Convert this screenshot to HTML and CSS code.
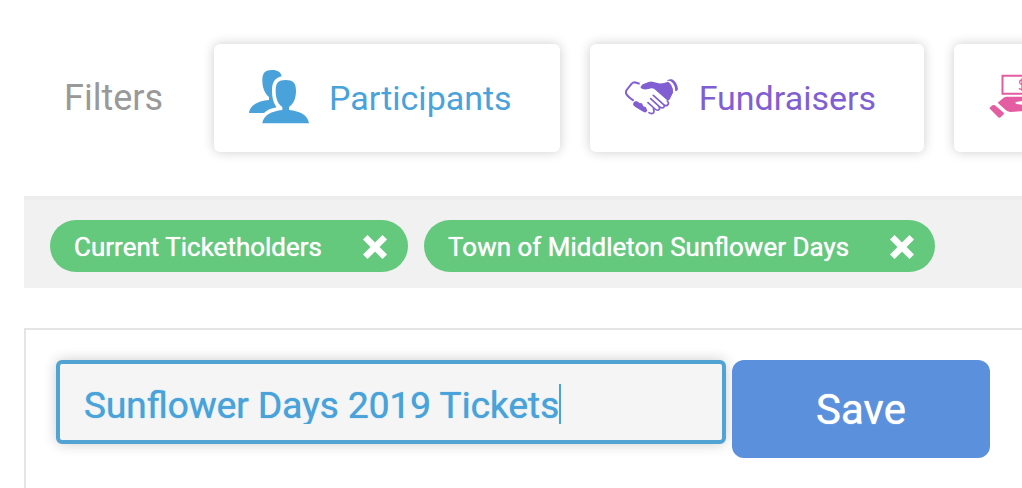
FILE: index.html
```html
<!DOCTYPE html>
<html lang="en">
<head>
<meta charset="utf-8">
<title>Filters</title>
<link rel="stylesheet" href="styles.css">
</head>
<body>
<main class="page">
  <nav class="filters" aria-label="Filters">
    <span class="filters-label">Filters</span>
    <button type="button" class="card card-participants">
      <svg class="icon-people" viewBox="147 117 180 165" aria-hidden="true">
        <path fill="currentColor" d="M147 249C149 225 174 213 207 210V201C193 190 187 171 187 151C187 128 196 120 216 120C234 120 243 127 245 139C225 143 216 158 216 181C216 204 221 221 230 232C213 235 201 240 192 249Z"/>
        <path fill="currentColor" d="M187 280C190 256 215 243 247 240V231C232 220 227 203 227 182C227 158 236 150 257 150C278 150 288 158 288 182C288 203 282 220 267 231V240C300 243 324 256 327 280Z"/>
      </svg>
      <span>Participants</span>
    </button>
    <button type="button" class="card card-fundraisers">
      <svg class="icon-shake" viewBox="129 144 162 111" aria-hidden="true">
        <path fill="none" stroke="currentColor" stroke-width="6" d="M173 161L158 157Q153 157 149 161L134 180Q130 186 133 192Q137 200 155 212"/>
        <path fill="currentColor" d="M176 170Q179 162 190 160Q202 154 211 155L230 160Q245 161 258 155Q263 157 268 166Q275 178 273 188L262 210Q257 213 252 208L216 176Q208 173 200 177Q184 181 176 174Z"/>
        <path fill="currentColor" d="M256 151Q263 146 270 148Q285 155 288 178Q286 184 280 184Q280 165 268 155Q263 151 256 153Z"/>
        <path fill="currentColor" d="M153 222Q154 214 162 213Q169 215 172 219L180 220L184 229Q193 230 194 237Q198 241 193 246Q189 249 181 244L160 231Q153 227 153 222Z"/>
        <path fill="none" stroke="currentColor" stroke-width="5" stroke-linecap="round" d="M214 196L244 223Q251 230 257 225Q262 220 256 213M206 206L232 230Q241 237 246 231Q248 227 244 223M198 218L219 237Q227 244 232 238Q234 234 230 229M201 248Q208 253 214 249Q218 245 214 237"/>
      </svg>
      <span>Fundraisers</span>
    </button>
    <button type="button" class="card card-donations" aria-label="Donations">
      <svg class="icon-money" viewBox="256 129 198 132" aria-hidden="true">
        <path fill="none" stroke="currentColor" stroke-width="6" d="M296.500 134.500H416V188.500H296.500Z"/>
        <path fill="none" stroke="currentColor" stroke-width="4" d="M363 150Q359 145 353 147Q347 149 348 155Q349 159 356 161Q364 164 363 170Q361 176 354 176Q349 175 346 172M355 142V180"/>
        <path fill="currentColor" d="M282 215L300 200Q304 197 310 197H362Q374 199 374 207L336 213Q334 217 339 219L380 225L440 205Q448 208 444 214L390 238L320 243Q311 242 306 237ZM257 232L264 224Q269 220 274 223L300 245Q302 248 299 251L289 260Q286 261 283 258Z"/>
      </svg>
    </button>
  </nav>

  <section class="tags" aria-label="Active filters">
    <span class="tag">Current Ticketholders
      <button type="button" class="tag-close" aria-label="Remove Current Ticketholders">
        <svg viewBox="0 0 24 24" aria-hidden="true"><path d="M3 3L21 21M21 3L3 21"/></svg>
      </button>
    </span>
    <span class="tag">Town of Middleton Sunflower Days
      <button type="button" class="tag-close" aria-label="Remove Town of Middleton Sunflower Days">
        <svg viewBox="0 0 24 24" aria-hidden="true"><path d="M3 3L21 21M21 3L3 21"/></svg>
      </button>
    </span>
  </section>

  <form class="panel">
    <div class="field">
      <input class="field-input" type="text" aria-label="Filter name" value="Sunflower Days 2019 Tickets">
    </div>
    <button type="button" class="save">Save</button>
  </form>
</main>
</body>
</html>
```
FILE: styles.css
```css
* { box-sizing: border-box; }

body {
  margin: 0;
  background: #fff;
  font-family: Roboto, "Liberation Sans", sans-serif;
}

button, input { font: inherit; }
button { border: 0; cursor: pointer; }

.page {
  display: flex;
  flex-direction: column;
  min-height: 100vh;
  padding-left: 24px;
}

.filters {
  display: flex;
  align-items: center;
  gap: 30px;
  padding: 44px 0 44px 40px;
  overflow: hidden;
  font-size: 34px;
}

.filters-label {
  flex: none;
  margin-right: 21px;
  color: #999;
  font-size: 36px;
}

.card {
  display: flex;
  flex: none;
  align-items: center;
  gap: 20px;
  min-height: 108px;
  padding: 0 48px 0 35px;
  border-radius: 6px;
  background: #fff;
  box-shadow: 0 0 12px rgba(0, 0, 0, 0.2);
}

.card svg { flex: none; margin-bottom: 4px; }
.card-participants { color: #49a2da; }
.card-fundraisers { color: #815fd2; }
.card-donations { color: #e45da2; }
.icon-people { width: 60px; height: 55px; }
.icon-shake { width: 54px; height: 37px; }
.icon-money { width: 66px; height: 44px; }

.tags {
  display: flex;
  gap: 16px;
  padding: 20px 26px 16px;
  border-top: 4px solid #ededed;
  background: #f1f1f1;
}

.tag {
  display: flex;
  align-items: center;
  gap: 40px;
  height: 52px;
  padding: 2px 20px 0 24px;
  border-radius: 26px;
  background: #64c87d;
  color: #fff;
  font-size: 26px;
  text-shadow: 0 0 1px currentColor;
  white-space: nowrap;
}

.tag-close {
  display: flex;
  padding: 0;
  background: none;
  color: #fff;
}

.tag-close svg {
  width: 26px;
  height: 26px;
  fill: none;
  stroke: currentColor;
  stroke-width: 6;
}

.panel {
  display: flex;
  flex: 1;
  align-items: flex-start;
  gap: 6px;
  margin-top: 40px;
  padding: 30px 32px 30px 30px;
  border: solid #e5e5e5;
  border-width: 2px 0 0 2px;
}

.field {
  display: flex;
  flex: 1;
  align-items: center;
  height: 84px;
  padding: 4px 24px 0;
  border: 4px solid #50a3d3;
  border-radius: 6px;
  background: #f5f5f5;
  box-shadow: 0 0 14px rgba(0, 0, 0, 0.2);
}

.field-input {
  field-sizing: content;
  height: 40px;
  padding: 2px 0 0;
  border: 0;
  border-right: 2px solid #49a2da;
  outline: 0;
  background: none;
  color: #49a2da;
  font-size: 37px;
  text-shadow: 0 0 1px currentColor;
}

.save {
  min-width: 258px;
  height: 98px;
  border-radius: 12px;
  background: #5b90dc;
  color: #fff;
  font-size: 42px;
  text-shadow: 0 0 1px currentColor;
}
```
